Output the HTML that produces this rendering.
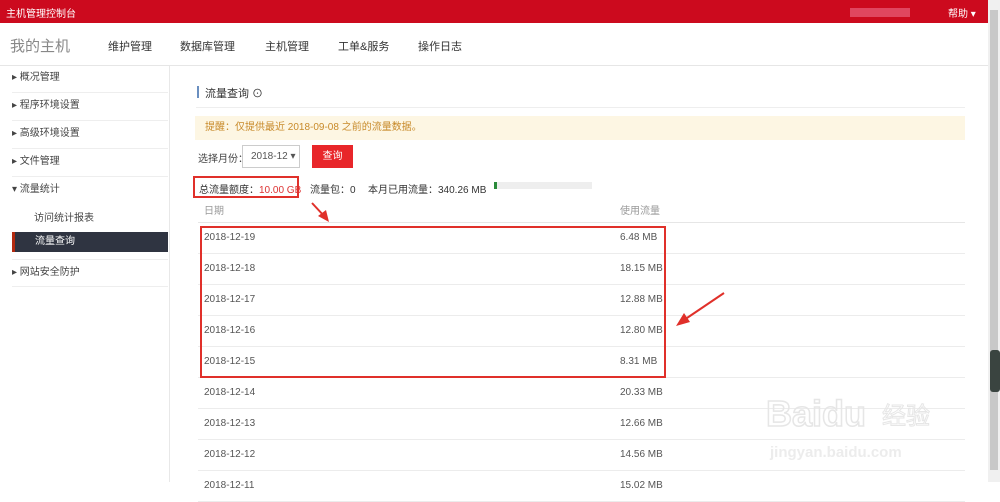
<!DOCTYPE html><html><head><meta charset="utf-8"><style>
*{margin:0;padding:0;box-sizing:border-box}
body{width:1000px;height:482px;overflow:hidden;background:#fff;font-family:"Liberation Sans","Noto Sans CJK SC",sans-serif;font-size:11px;color:#444;position:relative}
.a{position:absolute}
.top{left:0;top:0;width:988px;height:23px;background:#cc0a1e}
.nav{left:0;top:23px;width:988px;height:43px;border-bottom:1px solid #e6e6e6;background:#fff}
.side{left:0;top:66px;width:170px;height:416px;border-right:1px solid #e8e8e8}
.si{left:12px;width:156px;height:28px;line-height:26px;border-bottom:1px solid #eee;font-size:10px;color:#444}
.row{left:198px;width:767px;height:31px;border-bottom:1px solid #ececec;line-height:30px;font-size:10px;color:#555}
.row span{position:absolute;left:422px}
</style></head><body>
<div class="a top"></div>
<div class="a" style="left:6px;top:5px;color:#fff;font-size:10px">主机管理控制台</div>
<div class="a" style="left:850px;top:8px;width:60px;height:9px;background:#e8607a;opacity:.7"></div>
<div class="a" style="left:948px;top:5px;color:#fff;font-size:10px">帮助 ▾</div>
<div class="a nav"></div>
<div class="a" style="left:10px;top:35px;font-size:15px;color:#888">我的主机</div>
<div class="a" style="left:108px;top:38px;font-size:11px;color:#333">维护管理</div>
<div class="a" style="left:180px;top:38px;font-size:11px;color:#333">数据库管理</div>
<div class="a" style="left:265px;top:38px;font-size:11px;color:#333">主机管理</div>
<div class="a" style="left:338px;top:38px;font-size:11px;color:#333">工单&amp;服务</div>
<div class="a" style="left:418px;top:38px;font-size:11px;color:#333">操作日志</div>
<div class="a side"></div>
<div class="a si" style="top:65px">▸ 概况管理</div>
<div class="a si" style="top:93px">▸ 程序环境设置</div>
<div class="a si" style="top:121px">▸ 高级环境设置</div>
<div class="a si" style="top:149px">▸ 文件管理</div>
<div class="a si" style="top:177px;border:none">▾ 流量统计</div>
<div class="a" style="left:34px;top:209px;font-size:10px">访问统计报表</div>
<div class="a" style="left:12px;top:232px;width:156px;height:20px;background:#2f3441;border-left:3px solid #b32a10;color:#fff;font-size:10px;line-height:20px;padding-left:20px">流量查询</div>
<div class="a si" style="top:259px;border-top:1px solid #eee">▸ 网站安全防护</div>
<div class="a" style="left:988px;top:0;width:12px;height:482px;background:#f0f0f0"></div>
<div class="a" style="left:990px;top:10px;width:8px;height:460px;background:#c8c8c8"></div>
<div class="a" style="left:990px;top:350px;width:10px;height:42px;background:#3a4440;border-radius:3px"></div>
<div class="a" style="left:197px;top:86px;width:2px;height:12px;background:#6a8fc0"></div>
<div class="a" style="left:205px;top:85px;font-size:11px;color:#333">流量查询 ⊙</div>
<div class="a" style="left:196px;top:107px;width:769px;height:1px;background:#eee"></div>
<div class="a" style="left:195px;top:116px;width:770px;height:24px;background:#fdf6e3;color:#c88a2a;font-size:10px;line-height:24px;padding-left:10px">提醒：仅提供最近 2018-09-08 之前的流量数据。</div>
<div class="a" style="left:198px;top:150px;font-size:10px">选择月份：</div>
<div class="a" style="left:242px;top:145px;width:58px;height:23px;border:1px solid #ccc;font-size:10px;line-height:21px;padding-left:8px;color:#555">2018-12 ▾</div>
<div class="a" style="left:312px;top:145px;width:41px;height:23px;background:#e8262a;color:#fff;font-size:10px;line-height:23px;text-align:center">查询</div>
<div class="a" style="left:193px;top:176px;width:106px;height:22px;border:2px solid #e0302a"></div>
<div class="a" style="left:199px;top:181px;font-size:10px;color:#333">总流量额度：<span style="color:#d33">10.00 GB</span></div>
<div class="a" style="left:310px;top:181px;font-size:10px;color:#333">流量包：0</div>
<div class="a" style="left:368px;top:181px;font-size:10px;color:#333">本月已用流量：340.26 MB</div>
<div class="a" style="left:494px;top:182px;width:98px;height:7px;background:#eee"></div>
<div class="a" style="left:494px;top:182px;width:3px;height:7px;background:#2a8a3a"></div>
<div class="a" style="left:198px;top:201px;width:767px;height:22px;border-bottom:1px solid #e6e6e6;font-size:10px;color:#999;line-height:22px;padding-left:6px">日期<span style="position:absolute;left:422px">使用流量</span></div>
<div class="a row" style="top:223px;padding-left:6px">2018-12-19<span>6.48 MB</span></div>
<div class="a row" style="top:254px;padding-left:6px">2018-12-18<span>18.15 MB</span></div>
<div class="a row" style="top:285px;padding-left:6px">2018-12-17<span>12.88 MB</span></div>
<div class="a row" style="top:316px;padding-left:6px">2018-12-16<span>12.80 MB</span></div>
<div class="a row" style="top:347px;padding-left:6px">2018-12-15<span>8.31 MB</span></div>
<div class="a row" style="top:378px;padding-left:6px">2018-12-14<span>20.33 MB</span></div>
<div class="a row" style="top:409px;padding-left:6px">2018-12-13<span>12.66 MB</span></div>
<div class="a row" style="top:440px;padding-left:6px">2018-12-12<span>14.56 MB</span></div>
<div class="a row" style="top:471px;padding-left:6px">2018-12-11<span>15.02 MB</span></div>
<div class="a" style="left:200px;top:226px;width:466px;height:152px;border:2px solid #e0302a"></div>
<svg class="a" style="left:0;top:0" width="1000" height="482">
<line x1="312" y1="203" x2="325" y2="217" stroke="#e0302a" stroke-width="2"/><polygon points="329,222 318,216 326,210" fill="#e0302a"/>
<line x1="724" y1="293" x2="684" y2="320" stroke="#e0302a" stroke-width="2"/><polygon points="676,326 684,313 690,322" fill="#e0302a"/>
<text x="766" y="426" font-size="36" font-weight="bold" fill="none" stroke="#e6e6e6" stroke-width="1.5" font-family="Liberation Sans">Baidu</text>
<text x="882" y="424" font-size="24" fill="none" stroke="#e6e6e6" font-family="Noto Sans CJK SC">经验</text>
<text x="770" y="457" font-size="15" fill="#ececec" font-family="Liberation Sans" font-weight="bold">jingyan.baidu.com</text>
</svg>
</body></html>
